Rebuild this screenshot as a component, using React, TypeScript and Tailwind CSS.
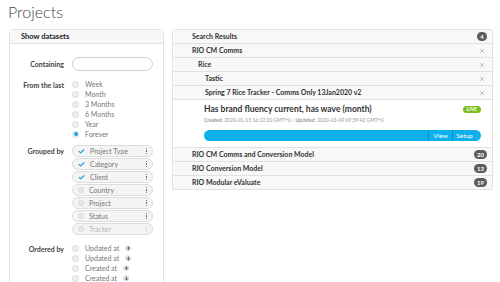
import { Check, ArrowUp, ArrowDown, X } from 'lucide-react';

const periods = ['Week', 'Month', '3 Months', '6 Months', 'Year', 'Forever'];
const groups = [
  { name: 'Project Type', checked: true },
  { name: 'Category', checked: true },
  { name: 'Client', checked: true },
  { name: 'Country', checked: false },
  { name: 'Project', checked: false },
  { name: 'Status', checked: false },
  { name: 'Tracker', checked: false, disabled: true },
];
const orders = [
  { name: 'Updated at', up: true },
  { name: 'Updated at', up: false },
  { name: 'Created at', up: true },
  { name: 'Created at', up: false },
];

function Radio({ selected }: { selected?: boolean }) {
  return (
    <span
      className={`w-[7px] h-[7px] rounded-full shrink-0 flex items-center justify-center ${
        selected ? 'bg-white border border-[#d6d6d6]' : 'bg-[#efefef] border border-[#dcdcdc]'
      }`}
    >
      {selected && <span className="w-[4px] h-[4px] rounded-full bg-[#1a9fe0]" />}
    </span>
  );
}

function Kebab({ faded }: { faded?: boolean }) {
  return (
    <span className="flex flex-col gap-[1px] items-center">
      {[0, 1, 2].map((i) => (
        <span key={i} className={`w-[1.5px] h-[1.5px] rounded-full ${faded ? 'bg-[#c8c8c8]' : 'bg-[#555]'}`} />
      ))}
    </span>
  );
}

function FieldRow({ label, children }: { label: string; children: React.ReactNode }) {
  return (
    <div className="flex gap-[8px]">
      <div className="w-[54px] text-right text-[7px] font-bold text-[#444] leading-[10px] pt-[1px] shrink-0">{label}</div>
      <div className="flex-1">{children}</div>
    </div>
  );
}

function LeftPanel() {
  return (
    <div className="w-[155px] h-[260px] shrink-0 border border-[#e2e2e2] rounded-t-[4px] overflow-hidden">
      <div className="h-[14px] bg-[#f7f7f7] border-b border-[#e2e2e2] pl-[11px] text-[7.5px] font-bold leading-[13px] text-[#222]">
        Show datasets
      </div>
      <div className="pt-[13px] flex flex-col">
        <div className="flex gap-[8px] items-center">
          <div className="w-[54px] text-right text-[7px] font-bold text-[#444] shrink-0">Containing</div>
          <div className="w-[81px] h-[14px] rounded-full border border-[#d0d0d0] bg-white" />
        </div>

        <div className="mt-[8px]">
          <FieldRow label="From the last">
            <div className="flex flex-col">
              {periods.map((p) => (
                <div key={p} className="h-[10px] flex items-center gap-[6px]">
                  <Radio selected={p === 'Forever'} />
                  <span className="text-[7px] text-[#777]">{p}</span>
                </div>
              ))}
            </div>
          </FieldRow>
        </div>

        <div className="mt-[6px]">
          <FieldRow label="Grouped by">
            <div className="flex flex-col gap-[1px] w-[81px]">
              {groups.map((g) => (
                <div
                  key={g.name}
                  className="h-[12px] rounded-full border border-[#dcdcdc] bg-[#f4f4f4] flex items-center pl-[5px] pr-[5px] gap-[5px]"
                >
                  {g.checked ? (
                    <Check className="w-[7px] h-[7px] text-[#1a9fe0]" strokeWidth={4} />
                  ) : (
                    <span className="w-[6px] h-[6px] rounded-full bg-[#e8e8e8] border border-[#dadada]" />
                  )}
                  <span className={`text-[7px] font-normal flex-1 ${g.disabled ? 'text-[#bbb]' : 'text-[#777]'}`}>
                    {g.name}
                  </span>
                  <Kebab faded={g.disabled} />
                </div>
              ))}
            </div>
          </FieldRow>
        </div>

        <div className="mt-[8px]">
          <FieldRow label="Ordered by">
            <div className="flex flex-col">
              {orders.map((o, i) => (
                <div key={i} className="h-[10px] flex items-center gap-[6px]">
                  <Radio />
                  <span className="text-[7px] text-[#777]">{o.name}</span>
                  <span className="w-[6px] h-[6px] rounded-full bg-[#e6e6e6] flex items-center justify-center">
                    {o.up ? (
                      <ArrowUp className="w-[5px] h-[5px] text-[#555]" strokeWidth={4} />
                    ) : (
                      <ArrowDown className="w-[5px] h-[5px] text-[#555]" strokeWidth={4} />
                    )}
                  </span>
                </div>
              ))}
            </div>
          </FieldRow>
        </div>
      </div>
    </div>
  );
}

function Count({ n }: { n: string }) {
  return (
    <span className="h-[9px] min-w-[10px] px-[3px] rounded-full bg-[#5c5c5c] text-white text-[6px] font-bold leading-[9px] text-center">
      {n}
    </span>
  );
}

function Row({ label, indent, right }: { label: string; indent: string; right: React.ReactNode }) {
  return (
    <div className={`h-[14px] border-b border-[#e2e2e2] bg-[#f8f8f8] flex items-center pr-[5px] ${indent}`}>
      <span className="flex-1 text-[7px] font-bold text-[#333]">{label}</span>
      {right}
    </div>
  );
}

const close = (
  <span className="w-[10px] flex justify-center">
    <X className="w-[6px] h-[6px] text-[#999]" strokeWidth={2.5} />
  </span>
);

function RightPanel() {
  return (
    <div className="w-[321px] shrink-0 border border-[#e2e2e2] border-b-0 rounded-t-[4px] overflow-hidden">
      <Row label="Search Results" indent="pl-[19px]" right={<Count n="4" />} />
      <Row label="RIO CM Comms" indent="pl-[19px]" right={close} />
      <Row label="Rice" indent="pl-[25px]" right={close} />
      <Row label="Tastic" indent="pl-[32px]" right={close} />
      <Row label="Spring 7 Rice Tracker - Comms Only 13Jan2020 v2" indent="pl-[32px]" right={close} />
      <div className="h-[48px] border-b border-[#e2e2e2] bg-white pl-[31px] pr-[11px] pt-[3px]">
        <div className="flex items-center h-[12px]">
          <span className="flex-1 text-[8.5px] font-bold text-[#333]">Has brand fluency current, has wave (month)</span>
          <span className="h-[7px] px-[4px] rounded-full bg-[#7ac01c] text-white text-[5px] font-bold leading-[7px]">
            LIVE
          </span>
        </div>
        <div className="text-[5px] text-[#999] leading-[8px] mt-[1px]">
          <span className="font-bold">Created:</span> 2020-01-13 16:12:20 GMT+0 / <span className="font-bold">Updated:</span> 2020-03-09 09:39:42 GMT+0
        </div>
        <div className="mt-[6px] h-[11px] rounded-full bg-[#0db0ea] flex justify-end pr-[5px]">
          <span className="border-l border-[#0a8fc0] w-[24px] text-center text-white text-[6.5px] leading-[11px]">View</span>
          <span className="border-l border-[#0a8fc0] w-[24px] text-center text-white text-[6.5px] leading-[11px]">Setup</span>
        </div>
      </div>
      <Row label="RIO CM Comms and Conversion Model" indent="pl-[19px]" right={<Count n="20" />} />
      <Row label="RIO Conversion Model" indent="pl-[19px]" right={<Count n="13" />} />
      <Row label="RIO Modular eValuate" indent="pl-[19px]" right={<Count n="19" />} />
    </div>
  );
}

export default function App() {
  return (
    <div className="w-[500px] h-[282px] overflow-hidden bg-white font-['Lato',sans-serif] text-[#333]">
      <h1 className="h-[29px] pl-[8px] pt-[1px] text-[16px] font-light leading-[22px] text-[#444]">Projects</h1>
      <div className="flex items-start gap-[8px] pl-[9px]">
        <LeftPanel />
        <RightPanel />
      </div>
    </div>
  );
}
